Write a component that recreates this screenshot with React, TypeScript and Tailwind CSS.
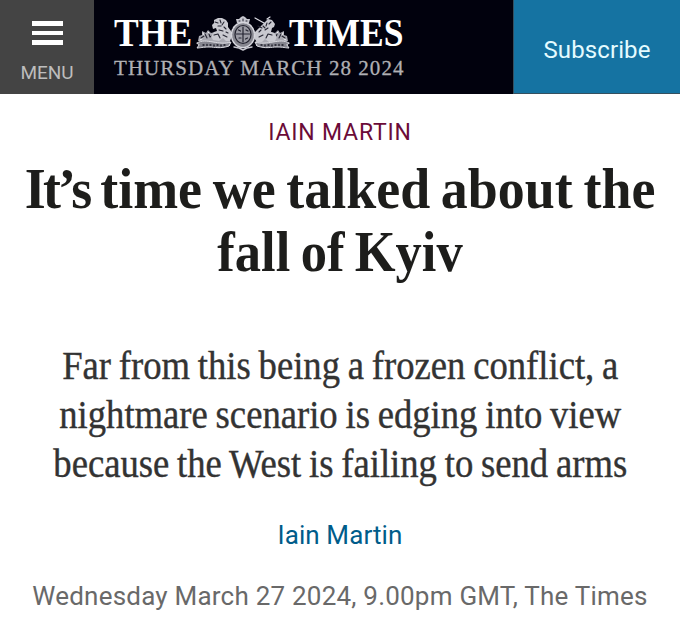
const standfirst = [
  "Far from this being a frozen conflict, a",
  "nightmare scenario is edging into view",
  "because the West is failing to send arms",
];

function MenuButton() {
  return (
    <button className="flex w-[94px] shrink-0 flex-col items-center bg-[#444444] pt-[21px]">
      <span className="flex flex-col gap-[5px]">
        <span className="h-[4.5px] w-[31px] bg-white" />
        <span className="h-[4.5px] w-[31px] bg-white" />
        <span className="h-[4.5px] w-[31px] bg-white" />
      </span>
      <span className="mt-[17px] text-[19px] leading-[22px] tracking-[-0.1px] text-[#bdbdbd]">MENU</span>
    </button>
  );
}

function Crest() {
  return (
    <svg className="mt-px h-[36px] w-[96px] shrink-0" viewBox="0 0 96 36" fill="none" strokeLinecap="round" strokeLinejoin="round">
      {/* foliage */}
      <path d="M3 26l1-5 3-1 0-4 4 2 2-3 3 3 4-1 3 3 6-2 6 4v9l-10 0-9-2z" fill="#a9a9b2" />
      <path d="M93 26l-1-5-3-1 0-4-4 2-2-3-3 3-4-1-3 3-6-2-6 4v9l10 0 9-2z" fill="#a9a9b2" />
      <path d="M6 23l3-2M10 19l2 4M14 19l1 3 3-2M19 23l3-2M90 23l-3-2M86 19l-2 4M82 19l-1 3-3-2M77 23l-3-2" stroke="#22222e" strokeWidth="1.1" />
      <path d="M8 18l1 2M13 17l1 1M5 25l2-1M88 18l-1 2M83 17l-1 1M91 25l-2-1" stroke="#f0f0f4" strokeWidth="1" />
      {/* scroll with the motto */}
      <path d="M2 28c5-3 10-2 16-1s12 2 18 0l-2 4c-9 3-14 1-20 1s-9 1-12 1l2-3z" fill="#85858f" stroke="#dcdce2" strokeWidth="1" />
      <path d="M94 28c-5-3-10-2-16-1s-12 2-18 0l2 4c9 3 14 1 20 1s9 1 12 1l-2-3z" fill="#85858f" stroke="#dcdce2" strokeWidth="1" />
      <path d="M8 30h1M12 29.500v1M15 30h1M19 30v1M22 30h1M26 31v-1M29 30h1M88 30h-1M84 29.500v1M81 30h-1M77 30v1M74 30h-1M70 31v-1M67 30h-1" stroke="#191925" strokeWidth="1.3" />
      {/* lion */}
      <path d="M17 10l2-2 0-3 4-2 4 0 4 2 2 3 0 4 3 4 1 5-2 5-4 0-3-3-4 3-6-1-2-4 3-4 3-1-1-3-3 1z" fill="#c9c9d0" />
      <path d="M20 7l3 1M25 5l1 3M29 7l-2 3M23 11l3 0M29 12l2 2M24 15l4 1M19 20l4-1 2 4M28 20l4 2M31 17l2 1" stroke="#252532" strokeWidth="1.1" />
      {/* unicorn */}
      <path d="M79 12l1-3-3-4-4-1-3 3-3 3-3 3-4 4-1 6 3 4 5 0 3-3 4 3 6-1 2-4-3-4-3-1 1-4z" fill="#c9c9d0" />
      <path d="M60 3l9 5M72 4l3-2" stroke="#dedee5" strokeWidth="1.2" />
      <path d="M76 7l-2 2M72 8l-1 3M68 11l2 2M73 13l-3 2M66 15l-2 2M77 20l-4-1-2 4M68 20l-4 2M63 11l4 2" stroke="#252532" strokeWidth="1.1" />
      {/* crown and shield */}
      <path d="M42 8l-1-4 3 0 2-2 2-1 2 1 2 2 3 0-1 4z" fill="#c6c6ce" />
      <path d="M44 6h1M48 4v2M52 6h-1" stroke="#252532" strokeWidth="1" />
      <ellipse cx="48" cy="20" rx="11.500" ry="12.500" fill="#86868f" stroke="#d6d6dd" strokeWidth="1.600" strokeDasharray="2 1.2" />
      <ellipse cx="48" cy="19.500" rx="8" ry="9" fill="#9b9ba4" stroke="#23232f" strokeWidth="1.200" />
      <path d="M48 12v15M41.500 19h13M43.500 15l2 1M51 15l2 1M44 23l2 0M50.500 24l2-1" stroke="#252532" strokeWidth="1.200" />
      <path d="M39 32l5 1 4 2 4-2 5-1" stroke="#c6c6ce" strokeWidth="1.500" />
    </svg>
  );
}

function Masthead() {
  return (
    <div className="flex-1 bg-[#01010d] pl-5 pt-[14px] font-['Liberation_Serif',serif]">
      <div className="flex h-[38px] text-[39px] font-bold leading-[38px] text-white">
        <span className="w-[81px] origin-left scale-x-[0.95]">THE</span>
        <Crest />
        <span className="origin-left -translate-x-[2px] scale-x-[0.91]">TIMES</span>
      </div>
      <div className="mt-1 whitespace-nowrap text-[21px] leading-6 tracking-[1.05px] text-[#b0b0b4] [-webkit-text-stroke:0.3px]">
        THURSDAY MARCH 28 2024
      </div>
    </div>
  );
}

export default function App() {
  return (
    <div className="h-[623px] w-[680px] overflow-hidden bg-white font-[Roboto,sans-serif]">
      <header className="flex h-[94px]">
        <MenuButton />
        <Masthead />
        <button className="flex w-[167px] shrink-0 items-center justify-center border-b border-l border-[#35505f] bg-[#1573a2] pt-[6px] text-[24px] tracking-[0.1px] text-[#e4fbff]">
          Subscribe
        </button>
      </header>

      <main className="flex flex-col items-center text-center">
        <div className="mt-[25px] text-[23px] leading-7 tracking-[0.8px] text-[#6b0b38]">IAIN MARTIN</div>

        <h1 className="mt-[11px] font-['Liberation_Serif',serif] text-[58px] font-bold leading-[62.5px] text-[#1d1d1b] [word-spacing:-3px]">
          <span className="block scale-x-[0.93] whitespace-nowrap">
            <span className="tracking-[-3px]">It’s</span> time we talked about the
          </span>
          <span className="block scale-x-[0.905] whitespace-nowrap">fall of Kyiv</span>
        </h1>

        <h2 className="mt-[58px] font-['Liberation_Serif',serif] text-[40px] leading-[49px] text-[#333333] [-webkit-text-stroke:0.4px] [font-variant-ligatures:none] [word-spacing:-1.5px]">
          {standfirst.map((line) => (
            <span key={line} className="block scale-x-[0.916] whitespace-nowrap">
              {line}
            </span>
          ))}
        </h2>

        <a className="mt-[31px] text-[26px] leading-8 tracking-[0.1px] text-[#005c8a]">Iain Martin</a>
        <div className="mt-[29px] whitespace-nowrap text-[26px] leading-8 tracking-[0.22px] text-[#696969]">
          Wednesday March 27 2024, 9.00pm GMT, The Times
        </div>
      </main>
    </div>
  );
}
